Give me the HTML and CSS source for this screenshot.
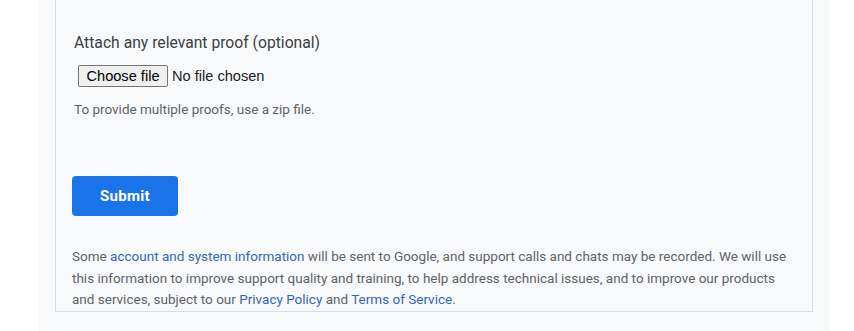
FILE: index.html
```html
<!DOCTYPE html>
<html>
<head>
<meta charset="utf-8">
<link rel="stylesheet" href="styles.css">
</head>
<body>
<div class="page">
  <div class="card">
    <div class="attach">
      <div class="attach-label">Attach any relevant proof (optional)</div>
      <div class="file-row">
        <button class="file-btn" type="button">Choose file</button>
        <span class="file-name">No file chosen</span>
      </div>
      <div class="hint">To provide multiple proofs, use a zip file.</div>
    </div>
    <button class="submit" type="button">Submit</button>
    <p class="legal">Some <a href="#">account and system information</a> will be sent to Google, and support calls and chats may be recorded. We will use this information to improve support quality and training, to help address technical issues, and to improve our products and services, subject to our <a href="#">Privacy Policy</a> and <a href="#">Terms of Service</a>.</p>
  </div>
</div>
</body>
</html>
```

FILE: styles.css
```css
html, body {
  margin: 0;
  padding: 0;
  background: #ffffff;
  height: 100%;
}
body {
  font-family: Roboto, "Liberation Sans", Arial, sans-serif;
}
.page {
  margin: 0 25px 0 39px;
  width: 758px;
  padding: 0 16px;
  min-height: 100%;
  background: #f8f9fa;
}
.card {
  border: 1px solid #dadce0;
  border-top: none;
  background: #f8f9fa;
  padding: 31px 16px 0 16px;
}
.attach {
  padding-left: 2px;
}
.attach-label {
  font-size: 15.7px;
  line-height: 24px;
  color: #3c4043;
}
.file-row {
  display: flex;
  align-items: center;
  margin-top: 10px;
  margin-left: 4px;
  font-family: "Liberation Sans", Arial, sans-serif;
  font-size: 14.6px;
}
.file-btn {
  font-family: "Liberation Sans", Arial, sans-serif;
  font-size: 14.6px;
  width: 90px;
  height: 22px;
  padding: 0;
  border: 1px solid #767676;
  border-radius: 2px;
  background: #efefef;
  color: #000;
  line-height: 20px;
}
.file-name {
  margin-left: 4px;
  color: #202124;
}
.hint {
  margin-top: 12px;
  font-size: 13.5px;
  line-height: 20px;
  color: #5f6368;
}
.submit {
  display: block;
  margin-top: 57px;
  width: 106px;
  height: 40px;
  border: none;
  border-radius: 4px;
  background: #1a73e8;
  color: #ffffff;
  font-family: Roboto, "Liberation Sans", Arial, sans-serif;
  font-weight: 700;
  font-size: 15px;
  letter-spacing: 0.3px;
}
.legal {
  margin: 30px 0 0 0;
  font-size: 13.5px;
  line-height: 21.5px;
  color: #5f6368;
}
.legal a {
  color: #3367b8;
  text-decoration: none;
}
```
